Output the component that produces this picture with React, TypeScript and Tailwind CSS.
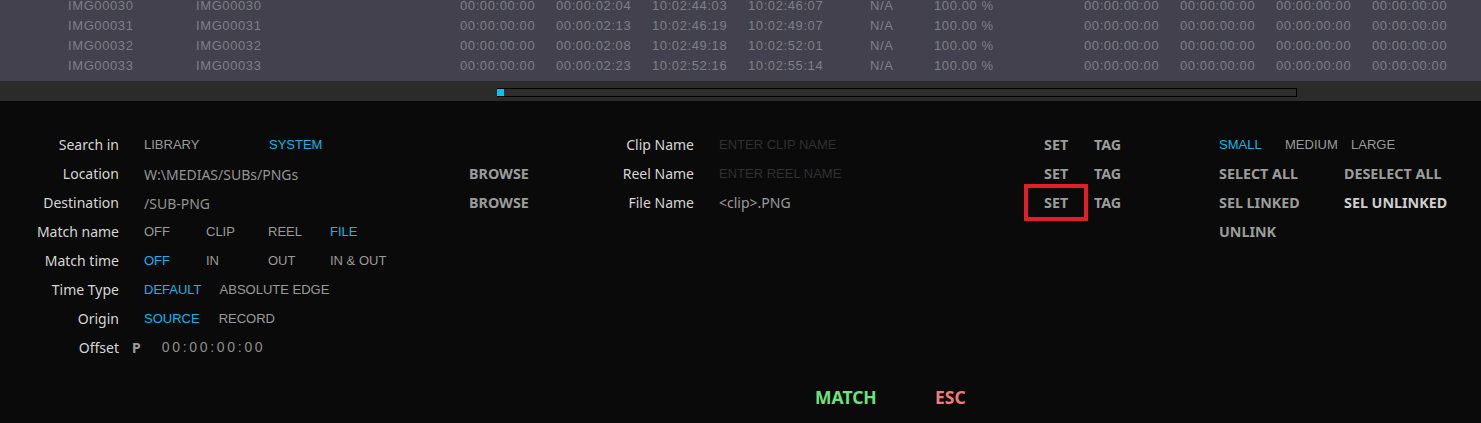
import React from 'react';

const rows = [
  ['IMG00030', 'IMG00030', '00:00:00:00', '00:00:02:04', '10:02:44:03', '10:02:46:07'],
  ['IMG00031', 'IMG00031', '00:00:00:00', '00:00:02:13', '10:02:46:19', '10:02:49:07'],
  ['IMG00032', 'IMG00032', '00:00:00:00', '00:00:02:08', '10:02:49:18', '10:02:52:01'],
  ['IMG00033', 'IMG00033', '00:00:00:00', '00:00:02:23', '10:02:52:16', '10:02:55:14'],
];

const sans = "font-['Noto_Sans',sans-serif]";
const arial = "font-['Liberation_Sans',Arial,sans-serif]";

const Opt = ({ on, children }: { on?: boolean; children: React.ReactNode }) => (
  <span className={`${arial} text-[13px] ${on ? 'text-[#16b4e8]' : 'text-[#9a9a9a]'}`}>{children}</span>
);

const Btn = ({ light, children }: { light?: boolean; children: React.ReactNode }) => (
  <span className={`${sans} font-bold text-[14.3px] ${light ? 'text-[#cfcfcf]' : 'text-[#9c9c9c]'}`}>{children}</span>
);

const Row = ({ children, className = '' }: { children?: React.ReactNode; className?: string }) => (
  <div className={`h-[29px] flex items-center ${className}`}>{children}</div>
);

const leftRows: { label: string; body: React.ReactNode }[] = [
  {
    label: 'Search in',
    body: (
      <div className="grid grid-cols-[125px_125px]">
        <Opt>LIBRARY</Opt>
        <Opt on>SYSTEM</Opt>
      </div>
    ),
  },
  { label: 'Location', body: <span className={`${sans} text-[14px] text-[#949494]`}>W:\MEDIAS/SUBs/PNGs</span> },
  { label: 'Destination', body: <span className={`${sans} text-[14px] text-[#949494]`}>/SUB-PNG</span> },
  {
    label: 'Match name',
    body: (
      <div className="grid grid-cols-[62px_62px_62px_62px]">
        <Opt>OFF</Opt>
        <Opt>CLIP</Opt>
        <Opt>REEL</Opt>
        <Opt on>FILE</Opt>
      </div>
    ),
  },
  {
    label: 'Match time',
    body: (
      <div className="grid grid-cols-[62px_62px_62px_62px]">
        <Opt on>OFF</Opt>
        <Opt>IN</Opt>
        <Opt>OUT</Opt>
        <Opt>IN &amp; OUT</Opt>
      </div>
    ),
  },
  {
    label: 'Time Type',
    body: (
      <div className="flex gap-[18px]">
        <Opt on>DEFAULT</Opt>
        <Opt>ABSOLUTE EDGE</Opt>
      </div>
    ),
  },
  {
    label: 'Origin',
    body: (
      <div className="flex gap-[19px]">
        <Opt on>SOURCE</Opt>
        <Opt>RECORD</Opt>
      </div>
    ),
  },
];

export default function App() {
  return (
    <div className="w-[1481px] h-[423px] overflow-hidden bg-[#0a0a0a]">
      {/* clip table, scrolled so the first row is partly hidden */}
      <div className={`h-[81px] overflow-hidden bg-[#42414d] ${arial}`}>
        <div className="-mt-[4px] pl-[68px]">
          {rows.map((r, i) => (
            <div
              key={i}
              className="h-[20px] grid grid-cols-[128px_264px_96px_96px_96px_122px_64px_150px_96px_96px_96px_1fr] items-center text-[13px] tracking-[0.6px] text-[#7f7f86]"
            >
              {r.map((c, j) => (
                <span key={j}>{c}</span>
              ))}
              <span>N/A</span>
              <span>100.00 %</span>
              <span>00:00:00:00</span>
              <span>00:00:00:00</span>
              <span>00:00:00:00</span>
              <span>00:00:00:00</span>
            </div>
          ))}
        </div>
      </div>

      {/* scroll bar */}
      <div className="h-[20px] bg-[#2b2b2b] pt-[7px] pl-[497px]">
        <div className="w-[800px] h-[9px] border border-black bg-[#2d2d2d] flex">
          <div className="w-[7px] h-full bg-[#12c0f0] -ml-px" />
        </div>
      </div>

      {/* settings */}
      <div className="pt-[29px] flex">
        {/* left */}
        <div className="w-[469px] shrink-0">
          {leftRows.map((r) => (
            <Row key={r.label}>
              <span className={`w-[119px] text-right ${sans} text-[14px] text-[#d6d6d6]`}>{r.label}</span>
              <div className="ml-[25px]">{r.body}</div>
            </Row>
          ))}
          <Row>
            <span className={`w-[119px] text-right ${sans} text-[14px] text-[#d6d6d6]`}>Offset</span>
            <span className={`ml-[13px] ${sans} font-bold text-[14px] text-[#9c9c9c]`}>P</span>
            <span className={`ml-[21px] ${arial} text-[14px] tracking-[2.7px] text-[#8e8e8e]`}>00:00:00:00</span>
          </Row>
        </div>

        {/* browse */}
        <div className="w-[120px] shrink-0">
          <Row />
          <Row><Btn>BROWSE</Btn></Row>
          <Row><Btn>BROWSE</Btn></Row>
        </div>

        {/* names */}
        <div className={`w-[105px] shrink-0 ${sans} text-[14px] text-[#d6d6d6]`}>
          <Row className="justify-end">Clip Name</Row>
          <Row className="justify-end">Reel Name</Row>
          <Row className="justify-end">File Name</Row>
        </div>
        <div className="w-[350px] shrink-0 pl-[25px]">
          <Row><span className={`${arial} text-[13px] text-[#303030]`}>ENTER CLIP NAME</span></Row>
          <Row><span className={`${arial} text-[13px] text-[#303030]`}>ENTER REEL NAME</span></Row>
          <Row><span className={`${sans} text-[14px] text-[#9a9a9a]`}>&lt;clip&gt;.PNG</span></Row>
        </div>

        {/* set / tag */}
        <div className="w-[50px] shrink-0">
          <Row><Btn>SET</Btn></Row>
          <Row><Btn>SET</Btn></Row>
          <Row className="relative">
            <Btn>SET</Btn>
            <div className="absolute -left-[20px] -top-[4px] w-[64px] h-[37px] border-4 border-[#e41e27]" />
          </Row>
        </div>
        <div className="w-[125px] shrink-0">
          <Row><Btn>TAG</Btn></Row>
          <Row><Btn>TAG</Btn></Row>
          <Row><Btn>TAG</Btn></Row>
        </div>

        {/* selection */}
        <div className="flex-1 min-w-0 whitespace-nowrap">
          <Row>
            <div className="grid grid-cols-[66px_66px_66px]">
              <Opt on>SMALL</Opt>
              <Opt>MEDIUM</Opt>
              <Opt>LARGE</Opt>
            </div>
          </Row>
          <Row>
            <div className="grid grid-cols-[125px_auto]">
              <Btn>SELECT ALL</Btn>
              <Btn>DESELECT ALL</Btn>
            </div>
          </Row>
          <Row>
            <div className="grid grid-cols-[125px_auto]">
              <Btn>SEL LINKED</Btn>
              <Btn light>SEL UNLINKED</Btn>
            </div>
          </Row>
          <Row><Btn>UNLINK</Btn></Row>
        </div>
      </div>

      {/* actions */}
      <div className={`mt-[21px] h-[29px] flex items-center pl-[815px] ${sans} font-bold text-[17.5px]`}>
        <span className="w-[120px] text-[#6ee27c]">MATCH</span>
        <span className="text-[#f27a7a]">ESC</span>
      </div>
    </div>
  );
}
